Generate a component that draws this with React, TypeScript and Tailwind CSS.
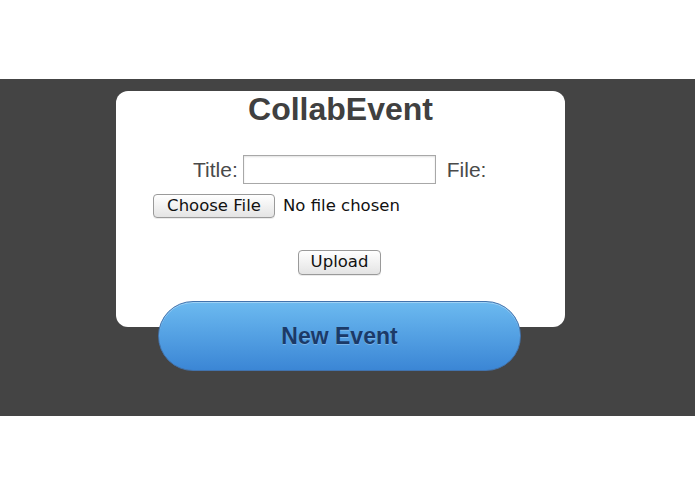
import React from "react";

const helv = { fontFamily: '"Liberation Sans", Arial, sans-serif' };
const lucida = { fontFamily: '"DejaVu Sans", "Liberation Sans", sans-serif' };

function MacButton({ children, className = "" }: { children: React.ReactNode; className?: string }) {
  return (
    <button
      type="button"
      style={lucida}
      className={
        "flex items-center justify-center rounded-[4px] border border-[#9a9a9a] bg-gradient-to-b from-[#ffffff] to-[#e4e4e4] text-[16.5px] leading-none text-[#111111] shadow-[0_1px_0_rgba(0,0,0,0.08)] " +
        className
      }
    >
      {children}
    </button>
  );
}

export default function App() {
  return (
    <div className="w-[695px] h-[494px] bg-white" style={helv}>
      <div className="h-[79px]" />
      <div className="bg-[#444444] pt-[12px] pb-[45px]">
        <div className="ml-[116px] w-[449px] flex flex-col">
          <div className="bg-white rounded-[12px] pt-[2px] pb-[52px] flex flex-col">
            <h1 className="text-center text-[32px] leading-[32px] font-bold text-[#404040]">CollabEvent</h1>
            <div className="mt-[30px] h-[29px] flex items-center pl-[77px] text-[21px] text-[#4a4a4a]">
              <span className="mr-[5px]">Title:</span>
              <input
                type="text"
                className="w-[193px] h-[29px] border border-[#a8a8a8] bg-white shadow-[inset_0_1px_2px_rgba(0,0,0,0.12)] outline-none"
              />
              <span className="ml-[11px]">File:</span>
            </div>
            <div className="mt-[10px] flex items-center pl-[37px]">
              <MacButton className="w-[122px] h-[24px]">Choose File</MacButton>
              <span style={lucida} className="ml-[8px] text-[16.5px] leading-none text-[#111111]">
                No file chosen
              </span>
            </div>
            <div className="mt-[32px] flex pl-[182px]">
              <MacButton className="w-[83px] h-[25px]">Upload</MacButton>
            </div>
          </div>
          <button
            type="button"
            className="relative ml-[42px] -mt-[26px] w-[363px] h-[70px] rounded-full border border-[#4273ad] bg-gradient-to-b from-[#6cbaf0] to-[#3b86d5] text-[23px] font-bold text-[#1b3a68] [text-shadow:0_1px_0_rgba(255,255,255,0.25)] shadow-[inset_0_1px_0_rgba(255,255,255,0.35)]"
            style={helv}
          >
            New Event
          </button>
        </div>
      </div>
    </div>
  );
}
